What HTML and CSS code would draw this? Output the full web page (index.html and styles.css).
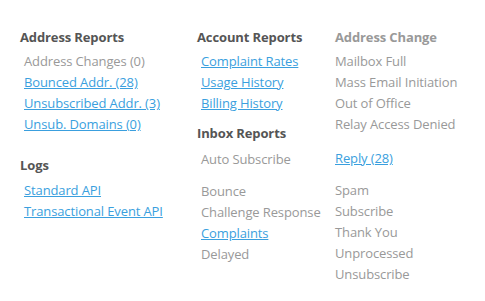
FILE: index.html
```html
<!DOCTYPE html>
<html lang="en">
<head>
    <meta charset="UTF-8">
    <title>Reports</title>
    <link rel="stylesheet" href="styles.css">
</head>
<body>

    <div class="reports">
        <div class="col col-first">
            <h3>Address Reports</h3>
            <ul class="list">
                <li>Address Changes (0)</li>
                <li><a href="#">Bounced Addr. (28)</a></li>
                <li><a href="#">Unsubscribed Addr. (3)</a></li>
                <li><a href="#">Unsub. Domains (0)</a></li>
            </ul>

            <h3 class="logs">Logs</h3>
            <ul class="list">
                <li><a href="#">Standard API</a></li>
                <li><a href="#">Transactional Event API</a></li>
            </ul>
        </div>

        <div class="col col-second">
            <h3>Account Reports</h3>
            <ul class="list">
                <li><a href="#">Complaint Rates</a></li>
                <li><a href="#">Usage History</a></li>
                <li><a href="#">Billing History</a></li>
            </ul>

            <h3 class="inbox">Inbox Reports</h3>
            <ul class="list">
                <li>Auto Subscribe</li>
            </ul>
            <ul class="list group">
                <li>Bounce</li>
                <li>Challenge Response</li>
                <li><a href="#">Complaints</a></li>
                <li>Delayed</li>
            </ul>
        </div>

        <div class="col col-third">
            <h3 class="muted">Address Change</h3>
            <ul class="list flat">
                <li>Mailbox Full</li>
                <li>Mass Email Initiation</li>
                <li>Out of Office</li>
                <li>Relay Access Denied</li>
            </ul>
            <ul class="list flat group wide">
                <li><a href="#">Reply (28)</a></li>
            </ul>
            <ul class="list flat group">
                <li>Spam</li>
                <li>Subscribe</li>
                <li>Thank You</li>
                <li>Unprocessed</li>
                <li>Unsubscribe</li>
            </ul>
        </div>
    </div>

</body>
</html>
```

FILE: styles.css
```css
body {
    font-family: 'Open Sans', sans-serif;
    font-size: 13px;
    letter-spacing: -0.12px;
    margin: 0;
    padding: 0;
    background-color: #fff;
    color: #999;
}

.reports {
    display: flex;
    padding: 27px 0 0 20px;
}

.col-first {
    width: 177px;
}

.col-second {
    width: 138px;
}

h3 {
    margin: 0 0 3px;
    font-size: 13px;
    font-weight: bold;
    line-height: 21px;
    color: #555;
}

h3.muted {
    color: #999;
}

h3.logs {
    margin-top: 20px;
    margin-bottom: 4px;
}

h3.inbox {
    margin-top: 9px;
    margin-bottom: 5px;
}

.list {
    list-style: none;
    margin: 0;
    padding: 0 0 0 4px;
}

.list.flat {
    padding-left: 0;
}

.list li {
    line-height: 21px;
    white-space: nowrap;
}

.group {
    margin-top: 11px;
}

.group.wide {
    margin-top: 13px;
}

a {
    color: #3a9fde;
    text-decoration: underline;
}
```
